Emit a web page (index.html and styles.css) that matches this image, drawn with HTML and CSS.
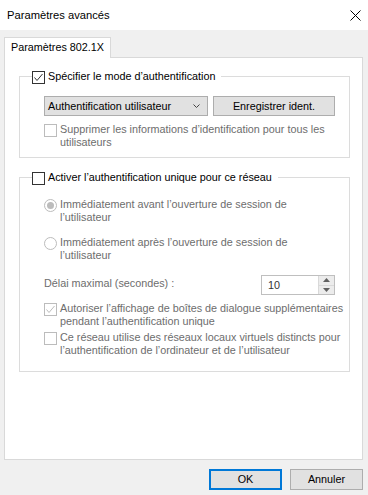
FILE: index.html
```html
<!DOCTYPE html>
<html lang="fr">
<head>
<meta charset="utf-8">
<title>Paramètres avancés</title>
<link rel="stylesheet" href="styles.css">
</head>
<body>
<div class="window">
  <div class="titlebar">
    <span class="title">Paramètres avancés</span>
    <svg class="close" width="11" height="11" viewBox="0 0 11 11"><path d="M0.5 0.5 L10.5 10.5 M10.5 0.5 L0.5 10.5" stroke="#000" stroke-width="1"/></svg>
  </div>
  <div class="main">
    <div class="tabs"><div class="tab">Paramètres 802.1X</div></div>
    <div class="panel">
      <fieldset class="group g1">
        <legend class="legend">
          <span class="box"><svg width="11" height="11" viewBox="0 0 11 11"><polyline points="1.5,5.5 4,8.5 9.5,2" fill="none" stroke="#333" stroke-width="1"/></svg></span>
          <span class="ltext">Spécifier le mode d’authentification</span>
        </legend>
        <div class="gbody g1body">
          <div class="row">
            <div class="combo"><span class="ctext">Authentification utilisateur</span><svg width="7" height="4" viewBox="0 0 7 4"><polyline points="0.5,0.5 3.5,3.5 6.5,0.5" fill="none" stroke="#444" stroke-width="1"/></svg></div>
            <div class="btn">Enregistrer ident.</div>
          </div>
          <div class="opt dis o-suppr">
            <span class="box"></span>
            <span class="txt">Supprimer les informations d’identification pour tous les<br>utilisateurs</span>
          </div>
        </div>
      </fieldset>
      <fieldset class="group g2">
        <legend class="legend">
          <span class="box"></span>
          <span class="ltext">Activer l’authentification unique pour ce réseau</span>
        </legend>
        <div class="gbody g2body">
          <div class="opt dis o-r1">
            <span class="radio on"><span class="dot"></span></span>
            <span class="txt">Immédiatement avant l’ouverture de session de<br>l’utilisateur</span>
          </div>
          <div class="opt dis o-r2">
            <span class="radio"></span>
            <span class="txt">Immédiatement après l’ouverture de session de<br>l’utilisateur</span>
          </div>
          <div class="delay">
            <span class="dlabel">Délai maximal (secondes) :</span>
            <div class="spin">
              <span class="sval">10</span>
              <div class="sbtns">
                <span class="sbtn"><svg width="7" height="4" viewBox="0 0 7 4"><polygon points="0,4 3.5,0 7,4" fill="#606060"/></svg></span>
                <span class="sbtn"><svg width="7" height="4" viewBox="0 0 7 4"><polygon points="0,0 3.5,4 7,0" fill="#606060"/></svg></span>
              </div>
            </div>
          </div>
          <div class="opt dis o-auto">
            <span class="box"><svg width="11" height="11" viewBox="0 0 11 11"><polyline points="1.5,5.5 4,8.5 9.5,2" fill="none" stroke="#bcbcbc" stroke-width="1"/></svg></span>
            <span class="txt">Autoriser l’affichage de boîtes de dialogue supplémentaires<br>pendant l’authentification unique</span>
          </div>
          <div class="opt dis o-vlan">
            <span class="box"></span>
            <span class="txt">Ce réseau utilise des réseaux locaux virtuels distincts pour<br>l’authentification de l’ordinateur et de l’utilisateur</span>
          </div>
        </div>
      </fieldset>
    </div>
    <div class="footer">
      <div class="fbtn ok">OK</div>
      <div class="fbtn">Annuler</div>
    </div>
  </div>
</div>
</body>
</html>
```

FILE: styles.css
```css
* { box-sizing: border-box; }
html, body { margin: 0; padding: 0; }
body {
  font-family: "Liberation Sans", Arial, sans-serif;
  font-size: 10.8px;
  color: #000;
  background: #f0f0f0;
}
.window {
  width: 368px;
  height: 495px;
  background: #f0f0f0;
  display: flex;
  flex-direction: column;
  overflow: hidden;
}
.titlebar {
  height: 30px;
  flex: none;
  background: #fff;
  display: flex;
  align-items: center;
  justify-content: space-between;
  padding: 0 7px 0 7px;
}
.title { line-height: 16px; font-size: 11.2px; white-space: nowrap; }
.close { display: block; }
.main {
  padding: 7px 5px 0 4px;
  display: flex;
  flex-direction: column;
}
.tabs { display: flex; }
.tab {
  width: 107px;
  height: 21px;
  border: 1px solid #d9d9d9;
  border-bottom: none;
  background: #fff;
  margin-bottom: -1px;
  position: relative;
  z-index: 1;
  padding-left: 6px;
  line-height: 19px;
  white-space: nowrap;
}
.panel {
  height: 403px;
  border: 1px solid #d9d9d9;
  background: #fff;
  padding: 0 12px 0 14px;
}
.group {
  border: 1px solid #dcdcdc;
  margin: 0;
  padding: 0;
  min-width: 0;
}
.g1 { margin-top: 11px; }
.g2 { margin-top: 12px; }
.legend {
  margin-left: 12px;
  padding: 0 6px 0 0;
  height: 14px;
  display: flex;
  align-items: flex-start;
}
.ltext { line-height: 14px; white-space: nowrap; }
.box {
  width: 13px;
  height: 13px;
  flex: none;
  border: 1px solid #333;
  background: #fff;
  margin-right: 3px;
  display: block;
}
.box svg { display: block; }
.legend .box { margin-top: 2px; }
.gbody { padding: 0 14px 0 24px; }
.g1body { padding-top: 13px; padding-bottom: 8px; }
.g2body { padding-top: 14px; padding-bottom: 14px; }
.row { display: flex; gap: 5px; height: 20px; }
.combo {
  width: 169px;
  height: 20px;
  background: #e1e1e1;
  border: 1px solid #adadad;
  display: flex;
  align-items: center;
  justify-content: space-between;
  padding: 0 7px 0 3px;
  line-height: 18px;
}
.ctext { white-space: nowrap; }
.combo svg { display: block; }
.btn {
  width: 126px;
  height: 20px;
  background: #e1e1e1;
  border: 1px solid #adadad;
  text-align: center;
  line-height: 18px;
  white-space: nowrap;
}
.opt { display: flex; align-items: flex-start; }
.opt .box, .opt .radio { margin-top: 1px; }
.txt { line-height: 13px; white-space: nowrap; }
.dis { color: #6d6d6d; }
.dis .box { border-color: #bcbcbc; }
.o-suppr { margin-top: 7px; }
.radio {
  width: 13px;
  height: 13px;
  flex: none;
  border: 1px solid #bcbcbc;
  border-radius: 50%;
  margin-right: 3px;
  display: flex;
  align-items: center;
  justify-content: center;
  background: #fff;
}
.dot {
  width: 7px;
  height: 7px;
  border-radius: 50%;
  background: #bcbcbc;
}
.o-r2 { margin-top: 12px; }
.delay {
  margin-top: 13px;
  display: flex;
  justify-content: space-between;
  align-items: flex-start;
}
.dlabel { color: #6d6d6d; line-height: 13px; margin-top: 2px; white-space: nowrap; }
.spin {
  width: 74px;
  height: 20px;
  border: 1px solid #bfbfbf;
  display: flex;
  justify-content: space-between;
  background: #fff;
}
.sval { padding-left: 6px; line-height: 18px; color: #333; }
.sbtns {
  width: 16px;
  display: flex;
  flex-direction: column;
  border-left: 1px solid #d9d9d9;
}
.sbtn {
  flex: 1;
  background: #ececec;
  display: flex;
  align-items: center;
  justify-content: center;
}
.sbtn + .sbtn { border-top: 1px solid #d9d9d9; }
.sbtn svg { display: block; }
.o-auto { margin-top: 7px; }
.o-vlan { margin-top: 3px; }
.footer {
  margin-top: 9px;
  display: flex;
  justify-content: flex-end;
  gap: 8px;
}
.fbtn {
  width: 73px;
  height: 21px;
  background: #e1e1e1;
  border: 1px solid #adadad;
  text-align: center;
  line-height: 19px;
}
.fbtn.ok {
  border: 2px solid #0078d7;
  line-height: 17px;
}
```
